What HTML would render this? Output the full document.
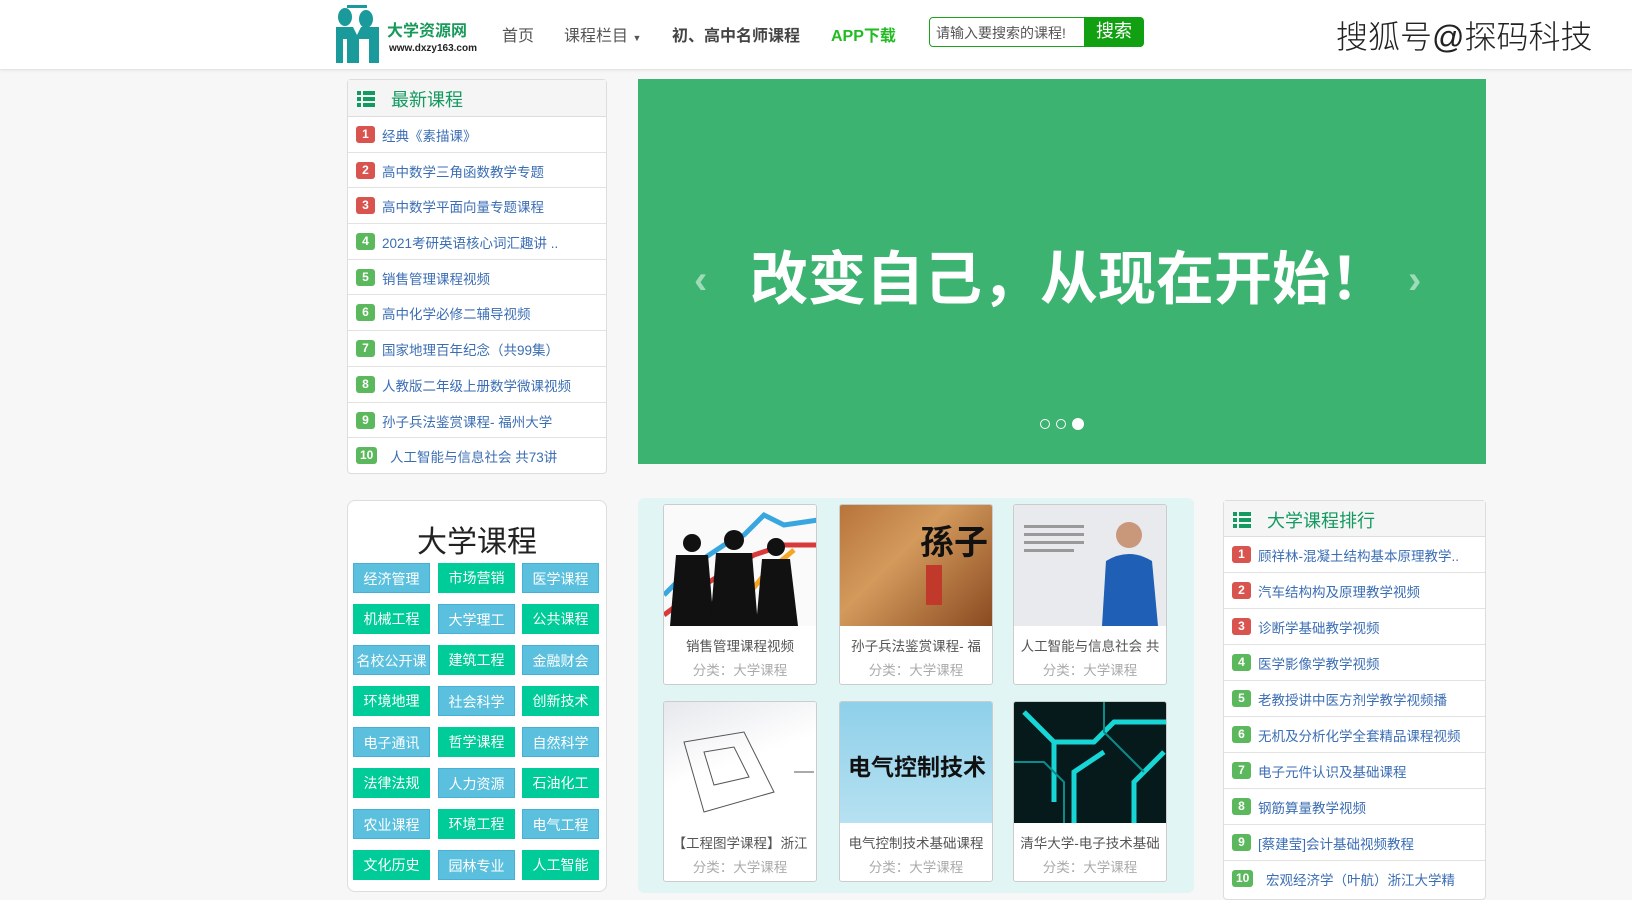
<!DOCTYPE html>
<html><head><meta charset="utf-8"><style>
*{margin:0;padding:0;box-sizing:border-box}
body{width:1632px;height:893px;overflow:hidden;background:#f7f7f7;font-family:"Liberation Sans","Noto Sans CJK SC",sans-serif;position:relative}
.a{position:absolute}
.hdr{left:0;top:0;width:1632px;height:70px;background:#fff;border-bottom:1px solid #e4e4e4;box-shadow:0 1px 3px rgba(0,0,0,.06)}
.nav{font-size:16px;color:#555;top:22px}
.panel{background:#fff;border:1px solid #ddd;border-radius:4px}
.ph{height:37px;background:#f5f5f5;border-bottom:1px solid #ddd;position:relative}
.ph .t{position:absolute;left:43px;top:6px;font-size:18px;color:#139a60}
.ico{position:absolute;left:9px;top:11px;width:18px;height:15px}
.ico i{position:absolute;height:4px;background:#139a60}
.row{height:35.7px;border-bottom:1px solid #e2e2e2;position:relative;font-size:13.5px;color:#3b6eb4}
.row .b{position:absolute;left:8px;top:9px;height:17px;min-width:19px;padding:0 4px;border-radius:3px;color:#fff;font-weight:bold;font-size:12px;line-height:17px;text-align:center}
.row .x{position:absolute;left:34px;top:8px;white-space:nowrap}
.r{background:#d9534f}.g{background:#5cb85c}
.btn{position:absolute;width:77px;height:30px;color:#fff;font-size:14px;line-height:30px;text-align:center}
.bb{background:#5bc0de;border:1px solid #46b0d6}.bg{background:#00cc99}
.card{position:absolute;width:154px;height:181px;background:#fff;border:1px solid #ccc;border-radius:3px;overflow:hidden}
.card .im{height:121px;position:relative;overflow:hidden}
.card .tt{font-size:13.5px;color:#555;text-align:center;margin-top:9px;white-space:nowrap;overflow:hidden}
.card .ct{font-size:13.5px;color:#aaa;text-align:center;margin-top:4px}
</style></head><body>
<div class="a hdr"></div>
<svg class="a" style="left:333px;top:5px" width="50" height="58" viewBox="0 0 50 58">
<rect x="14" y="0" width="20" height="3" fill="#1a9a9a"/>
<ellipse cx="12" cy="12" rx="7" ry="9" fill="#1a9a9a"/><ellipse cx="33" cy="14" rx="7" ry="9" fill="#1a9a9a"/>
<path d="M3 22h17l4 8 4-8h18v36h-10V34h-10v24H14V34H10v24H3z" fill="#1a9a9a"/>
</svg>
<div class="a" style="left:387px;top:17px;font-size:16px;font-weight:bold;color:#1a9a5a">大学资源网</div>
<div class="a" style="left:389px;top:43px;font-size:10px;font-weight:bold;color:#222">www.dxzy163.com</div>
<div class="a nav" style="left:502px">首页</div>
<div class="a nav" style="left:564px">课程栏目 <span style="font-size:9px">▼</span></div>
<div class="a nav" style="left:672px;color:#444;font-weight:bold">初、高中名师课程</div>
<div class="a nav" style="left:831px;color:#22bb22;font-weight:bold">APP下载</div>
<div class="a" style="left:929px;top:17px;width:156px;height:30px;border:1px solid #1aa31a;border-radius:4px 0 0 4px;background:#fff;font-size:14px;color:#555;padding:5px 0 0 6px">请输入要搜索的课程!</div>
<div class="a" style="left:1084px;top:17px;width:60px;height:30px;background:#11a011;border-radius:0 4px 4px 0;color:#fff;font-size:18px;text-align:center;line-height:29px">搜索</div>
<div class="a" style="left:1336px;top:12px;font-size:32px;font-weight:300;color:#222;text-shadow:1px 1px 0 #fff;letter-spacing:0px">搜狐号@探码科技</div>

<div class="a panel" style="left:347px;top:79px;width:260px;height:395px">
<div class="ph"><div class="ico"><i style="left:0;top:0;width:4px"></i><i style="left:6px;top:0;width:12px"></i><i style="left:0;top:6px;width:4px"></i><i style="left:6px;top:6px;width:12px"></i><i style="left:0;top:12px;width:4px"></i><i style="left:6px;top:12px;width:12px"></i></div><div class="t">最新课程</div></div>
<div class="row"><span class="b r">1</span><span class="x">经典《素描课》</span></div>
<div class="row"><span class="b r">2</span><span class="x">高中数学三角函数教学专题</span></div>
<div class="row"><span class="b r">3</span><span class="x">高中数学平面向量专题课程</span></div>
<div class="row"><span class="b g">4</span><span class="x">2021考研英语核心词汇趣讲 ..</span></div>
<div class="row"><span class="b g">5</span><span class="x">销售管理课程视频</span></div>
<div class="row"><span class="b g">6</span><span class="x">高中化学必修二辅导视频</span></div>
<div class="row"><span class="b g">7</span><span class="x">国家地理百年纪念（共99集）</span></div>
<div class="row"><span class="b g">8</span><span class="x">人教版二年级上册数学微课视频</span></div>
<div class="row"><span class="b g">9</span><span class="x">孙子兵法鉴赏课程- 福州大学</span></div>
<div class="row" style="border:none"><span class="b g">10</span><span class="x" style="left:42px">人工智能与信息社会 共73讲</span></div>
</div>

<div class="a" style="left:638px;top:79px;width:848px;height:385px;background:#3cb371"></div>
<div class="a" style="left:645px;top:245px;width:848px;text-align:center;font-size:58px;font-weight:bold;color:#fff;line-height:70px">改变自己，从现在开始！</div>
<div class="a" style="left:694px;top:258px;font-size:40px;color:#9edcb9;font-weight:bold">‹</div>
<div class="a" style="left:1408px;top:258px;font-size:40px;color:#9edcb9;font-weight:bold">›</div>
<div class="a" style="left:1040px;top:419px;width:10px;height:10px;border:1px solid #fff;border-radius:50%"></div>
<div class="a" style="left:1056px;top:419px;width:10px;height:10px;border:1px solid #fff;border-radius:50%"></div>
<div class="a" style="left:1072px;top:418px;width:12px;height:12px;background:#fff;border-radius:50%"></div>

<div class="a panel" style="left:347px;top:500px;width:260px;height:392px;border-radius:8px"></div>
<div class="a" style="left:347px;top:517px;width:260px;text-align:center;font-size:30px;color:#222">大学课程</div>
<div class="btn bb" style="left:353px;top:563px">经济管理</div><div class="btn bg" style="left:438px;top:563px">市场营销</div><div class="btn bb" style="left:522px;top:563px">医学课程</div>
<div class="btn bg" style="left:353px;top:604px">机械工程</div><div class="btn bb" style="left:438px;top:604px">大学理工</div><div class="btn bg" style="left:522px;top:604px">公共课程</div>
<div class="btn bb" style="left:353px;top:645px">名校公开课</div><div class="btn bg" style="left:438px;top:645px">建筑工程</div><div class="btn bb" style="left:522px;top:645px">金融财会</div>
<div class="btn bg" style="left:353px;top:686px">环境地理</div><div class="btn bb" style="left:438px;top:686px">社会科学</div><div class="btn bg" style="left:522px;top:686px">创新技术</div>
<div class="btn bb" style="left:353px;top:727px">电子通讯</div><div class="btn bg" style="left:438px;top:727px">哲学课程</div><div class="btn bb" style="left:522px;top:727px">自然科学</div>
<div class="btn bg" style="left:353px;top:768px">法律法规</div><div class="btn bb" style="left:438px;top:768px">人力资源</div><div class="btn bg" style="left:522px;top:768px">石油化工</div>
<div class="btn bb" style="left:353px;top:809px">农业课程</div><div class="btn bg" style="left:438px;top:809px">环境工程</div><div class="btn bb" style="left:522px;top:809px">电气工程</div>
<div class="btn bg" style="left:353px;top:850px">文化历史</div><div class="btn bb" style="left:438px;top:850px">园林专业</div><div class="btn bg" style="left:522px;top:850px">人工智能</div>

<div class="a" style="left:638px;top:498px;width:556px;height:395px;background:#e2f5f5;border-radius:6px"></div>
<div class="card" style="left:663px;top:504px"><div class="im" style="background:#fafafa">
<svg width="154" height="121"><path d="M0 90L30 60 60 40 80 30 100 10 120 20 154 15" stroke="#39a7df" stroke-width="5" fill="none"/><path d="M0 110L40 80 90 50 120 40 154 40" stroke="#d83a3a" stroke-width="5" fill="none"/><path d="M60 120L100 70 130 45" stroke="#f5a623" stroke-width="5" fill="none"/>
<g fill="#111"><circle cx="28" cy="38" r="9"/><path d="M12 50h32l6 71H6z"/><circle cx="70" cy="35" r="10"/><path d="M52 48h36l6 73H46z"/><circle cx="112" cy="42" r="9"/><path d="M98 54h28l8 67H92z"/></g></svg></div>
<div class="tt">销售管理课程视频</div><div class="ct">分类：大学课程</div></div>
<div class="card" style="left:839px;top:504px"><div class="im" style="background:linear-gradient(135deg,#b8743a,#d39a5c 40%,#8a4a20)"><div style="position:absolute;left:80px;top:10px;font-size:34px;color:#111;font-weight:bold">孫子</div><div style="position:absolute;left:86px;top:60px;width:16px;height:40px;background:#c0392b"></div></div>
<div class="tt">孙子兵法鉴赏课程- 福</div><div class="ct">分类：大学课程</div></div>
<div class="card" style="left:1013px;top:504px"><div class="im" style="background:#e8eaee"><svg width="154" height="121"><circle cx="115" cy="30" r="13" fill="#c9977a"/><path d="M88 121l4-65q23-14 46 0l6 65z" fill="#1f5fb5"/><g fill="#999"><rect x="10" y="20" width="60" height="3"/><rect x="10" y="28" width="60" height="3"/><rect x="10" y="36" width="60" height="3"/><rect x="10" y="44" width="50" height="3"/></g></svg></div>
<div class="tt">人工智能与信息社会 共</div><div class="ct">分类：大学课程</div></div>
<div class="card" style="left:663px;top:701px"><div class="im" style="background:linear-gradient(160deg,#e6e8ec,#fff 50%)"><svg width="154" height="121"><g stroke="#555" fill="none" stroke-width="1"><path d="M20 40l60-10 30 60-70 20z"/><path d="M40 50l30-5 15 30-35 8z"/><path d="M130 70h20"/></g></svg></div>
<div class="tt">【工程图学课程】浙江</div><div class="ct">分类：大学课程</div></div>
<div class="card" style="left:839px;top:701px"><div class="im" style="background:linear-gradient(#8fd0ea,#b6e1f1)"><div style="position:absolute;left:0;width:154px;text-align:center;top:46px;font-size:23px;font-weight:bold;color:#111;white-space:nowrap">电气控制技术</div></div>
<div class="tt">电气控制技术基础课程</div><div class="ct">分类：大学课程</div></div>
<div class="card" style="left:1013px;top:701px"><div class="im" style="background:#061a1c"><svg width="154" height="121"><g stroke="#19d6d6" stroke-width="5" fill="none"><path d="M10 10l30 30v60M40 40h40l20-20h54"/><path d="M60 121V70l30-20"/><path d="M120 121V80l30-30"/></g><g stroke="#0c8b8b" stroke-width="2" fill="none"><path d="M0 60h30l20 20v41M90 0v30l40 40"/></g></svg></div>
<div class="tt">清华大学-电子技术基础</div><div class="ct">分类：大学课程</div></div>

<div class="a panel" style="left:1223px;top:500px;width:263px;height:400px">
<div class="ph" style="height:36px"><div class="ico"><i style="left:0;top:0;width:4px"></i><i style="left:6px;top:0;width:12px"></i><i style="left:0;top:6px;width:4px"></i><i style="left:6px;top:6px;width:12px"></i><i style="left:0;top:12px;width:4px"></i><i style="left:6px;top:12px;width:12px"></i></div><div class="t">大学课程排行</div></div>
<div class="row" style="height:36px"><span class="b r">1</span><span class="x">顾祥林-混凝土结构基本原理教学..</span></div>
<div class="row" style="height:36px"><span class="b r">2</span><span class="x">汽车结构构及原理教学视频</span></div>
<div class="row" style="height:36px"><span class="b r">3</span><span class="x">诊断学基础教学视频</span></div>
<div class="row" style="height:36px"><span class="b g">4</span><span class="x">医学影像学教学视频</span></div>
<div class="row" style="height:36px"><span class="b g">5</span><span class="x">老教授讲中医方剂学教学视频播</span></div>
<div class="row" style="height:36px"><span class="b g">6</span><span class="x">无机及分析化学全套精品课程视频</span></div>
<div class="row" style="height:36px"><span class="b g">7</span><span class="x">电子元件认识及基础课程</span></div>
<div class="row" style="height:36px"><span class="b g">8</span><span class="x">钢筋算量教学视频</span></div>
<div class="row" style="height:36px"><span class="b g">9</span><span class="x">[蔡建莹]会计基础视频教程</span></div>
<div class="row" style="height:36px;border:none"><span class="b g">10</span><span class="x" style="left:42px">宏观经济学（叶航）浙江大学精</span></div>
</div>
</body></html>
